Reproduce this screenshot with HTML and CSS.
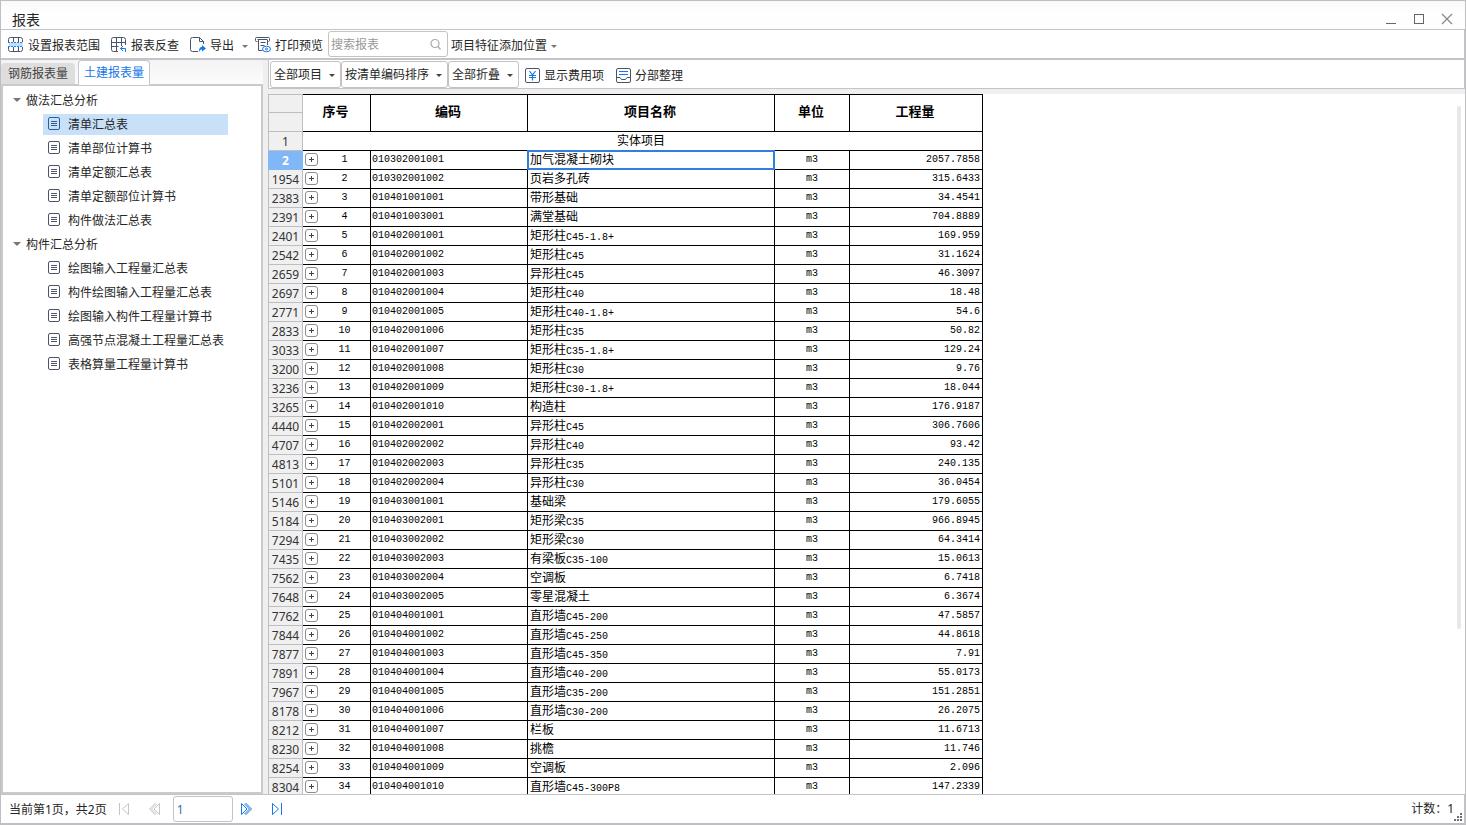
FILE: index.html
```html
<!DOCTYPE html>
<html lang="zh-CN">
<head>
<meta charset="utf-8">
<title>报表</title>
<link rel="stylesheet" href="styles.css">
</head>
<body>
<svg class="defs" aria-hidden="true">
  <symbol id="doc" viewBox="0 0 13 13"><rect x=".5" y=".5" width="11" height="12" rx="1.5" fill="none" stroke="currentColor"/><path d="M3 4.5h6M3 6.5h6M3 8.5h6" stroke="currentColor" fill="none"/></symbol>
</svg>
<header class="titlebar">
  <h1 class="title">报表</h1>
  <div class="window-buttons">
    <button aria-label="最小化"><svg width="12" height="12"><path d="M1 10.5h10" stroke="#666"/></svg></button>
    <button aria-label="最大化"><svg width="12" height="12"><rect x="1.500" y="1.500" width="9" height="9" fill="none" stroke="#666"/></svg></button>
    <button aria-label="关闭"><svg width="12" height="12"><path d="M1 1l10 10M11 1L1 11" stroke="#888" stroke-width="1.200"/></svg></button>
  </div>
</header>

<nav class="toolbar" aria-label="主工具栏">
  <button class="tool"><svg width="16" height="16" fill="none" stroke="#4b5468"><path d="M.5 5V2.500a2 2 0 0 1 2-2h10a2 2 0 0 1 2 2V5M.5 10v2.500a2 2 0 0 0 2 2h10a2 2 0 0 0 2-2V10M5.500 1v4M10.500 1v4M5.500 10v4M10.500 10v4"/><path d="M1 5.500h14v4H1z" fill="#b9e0ff" stroke="none"/><path d="M0 5.500h15M0 9.500h15" stroke="#2680e8" stroke-dasharray="2 1"/></svg>设置报表范围</button>
  <button class="tool"><svg width="16" height="16" fill="none" stroke="#4b5468"><path d="M7 14.500H2.500a2 2 0 0 1-2-2v-10a2 2 0 0 1 2-2h10a2 2 0 0 1 2 2V8M.5 5.500h14M.5 9.500h7M5.500 1v13M10.500 1v8"/><path d="M14.500 15v-3.500H9.500M12 9l-2.500 2.500 2.500 2.500" stroke="#1677e6"/></svg>报表反查</button>
  <button class="tool"><svg width="16" height="16" fill="none" stroke="#4b5468"><path d="M8 14.500H2.500a2 2 0 0 1-2-2v-10a2 2 0 0 1 2-2h7l4 4V7M9.500.5v4h4"/><path d="M9 15c0-4 1-5 3-5V8l4 3.500-4 3V12.500c-2 0-2 1-3 2.500z" fill="#1677e6" stroke="none"/></svg>导出<span class="caret wide"></span></button>
  <button class="tool"><svg width="16" height="16" fill="none" stroke="#4b5468"><path d="M2.500 4.500h-1a1 1 0 0 1-1-1v-2a1 1 0 0 1 1-1h12a1 1 0 0 1 1 1v2a1 1 0 0 1-1 1M2.500 2.500h10M3.500 3v10.500h4M12.500 3v5M5.500 5.500h5M5.500 8.500h4"/><ellipse cx="11.500" cy="12" rx="4" ry="2.800" stroke="#1677e6" fill="#fff"/><circle cx="11.500" cy="12" r="1" stroke="#1677e6"/></svg>打印预览</button>
  <label class="search"><input type="text" placeholder="搜索报表" aria-label="搜索报表"><svg width="11" height="12" fill="none" stroke="#aaa" stroke-width="1.200"><circle cx="5" cy="5.500" r="4"/><path d="M8 8.500l2.500 3"/></svg></label>
  <button class="tool">项目特征添加位置<span class="caret"></span></button>
</nav>

<main class="main">
  <aside class="sidebar">
    <div class="tabs" role="tablist">
      <button class="tab" role="tab">钢筋报表量</button>
      <button class="tab active" role="tab" aria-selected="true">土建报表量</button>
    </div>
    <div class="tree">
      <button class="group"><span class="caret"></span>做法汇总分析</button>
      <ul class="items">
        <li><a class="item selected" href="#"><svg class="doc"><use href="#doc"/></svg>清单汇总表</a></li>
        <li><a class="item" href="#"><svg class="doc"><use href="#doc"/></svg>清单部位计算书</a></li>
        <li><a class="item" href="#"><svg class="doc"><use href="#doc"/></svg>清单定额汇总表</a></li>
        <li><a class="item" href="#"><svg class="doc"><use href="#doc"/></svg>清单定额部位计算书</a></li>
        <li><a class="item" href="#"><svg class="doc"><use href="#doc"/></svg>构件做法汇总表</a></li>
      </ul>
      <button class="group"><span class="caret"></span>构件汇总分析</button>
      <ul class="items">
        <li><a class="item" href="#"><svg class="doc"><use href="#doc"/></svg>绘图输入工程量汇总表</a></li>
        <li><a class="item" href="#"><svg class="doc"><use href="#doc"/></svg>构件绘图输入工程量汇总表</a></li>
        <li><a class="item" href="#"><svg class="doc"><use href="#doc"/></svg>绘图输入构件工程量计算书</a></li>
        <li><a class="item" href="#"><svg class="doc"><use href="#doc"/></svg>高强节点混凝土工程量汇总表</a></li>
        <li><a class="item" href="#"><svg class="doc"><use href="#doc"/></svg>表格算量工程量计算书</a></li>
      </ul>
    </div>
  </aside>

  <section class="report">
    <div class="filters">
      <label class="pick"><select aria-label="项目范围"><option>全部项目</option></select></label>
      <label class="pick"><select aria-label="排序方式"><option>按清单编码排序</option></select></label>
      <label class="pick"><select aria-label="折叠方式"><option>全部折叠</option></select></label>
      <button class="tool"><svg width="15" height="15" fill="none"><rect x=".5" y=".5" width="14" height="14" rx="1.500" stroke="#4b5468"/><path d="M4.500 3l3 4 3-4M4 7.500h7M4 9.500h7M7.500 7v5.500" stroke="#1677e6" stroke-width="1.200"/></svg>显示费用项</button>
      <button class="tool"><svg width="15" height="15" fill="none"><rect x=".5" y=".5" width="14" height="14" rx="1.500" stroke="#4b5468"/><path d="M3 3.500h9M3 6.500h9" stroke="#1677e6"/><path d="M.5 9.500H4l1.500 2h4l1.500-2h3.500" stroke="#4b5468"/></svg>分部整理</button>
    </div>
    <div class="sheet">
      <div class="grid-view">
      <table class="grid">
        <colgroup><col class="c-row"><col class="c-plus"><col class="c-seq"><col class="c-code"><col class="c-name"><col class="c-unit"><col class="c-qty"></colgroup>
        <thead>
          <tr><td class="stub"></td><th rowspan="2" colspan="2">序号</th><th rowspan="2">编码</th><th rowspan="2">项目名称</th><th rowspan="2">单位</th><th rowspan="2">工程量</th></tr>
          <tr><td class="stub"></td></tr>
        </thead>
        <tbody>
          <tr><td class="stub">1</td><td class="section" colspan="6">实体项目</td></tr>
          <tr class="current"><td class="stub">2</td><td><button class="plus" aria-label="展开"></button></td><td>1</td><td>010302001001</td><td class="focus">加气混凝土砌块</td><td>m3</td><td>2057.7858</td></tr>
          <tr><td class="stub">1954</td><td><button class="plus" aria-label="展开"></button></td><td>2</td><td>010302001002</td><td>页岩多孔砖</td><td>m3</td><td>315.6433</td></tr>
          <tr><td class="stub">2383</td><td><button class="plus" aria-label="展开"></button></td><td>3</td><td>010401001001</td><td>带形基础</td><td>m3</td><td>34.4541</td></tr>
          <tr><td class="stub">2391</td><td><button class="plus" aria-label="展开"></button></td><td>4</td><td>010401003001</td><td>满堂基础</td><td>m3</td><td>704.8889</td></tr>
          <tr><td class="stub">2401</td><td><button class="plus" aria-label="展开"></button></td><td>5</td><td>010402001001</td><td>矩形柱<code>C45-1.8+</code></td><td>m3</td><td>169.959</td></tr>
          <tr><td class="stub">2542</td><td><button class="plus" aria-label="展开"></button></td><td>6</td><td>010402001002</td><td>矩形柱<code>C45</code></td><td>m3</td><td>31.1624</td></tr>
          <tr><td class="stub">2659</td><td><button class="plus" aria-label="展开"></button></td><td>7</td><td>010402001003</td><td>异形柱<code>C45</code></td><td>m3</td><td>46.3097</td></tr>
          <tr><td class="stub">2697</td><td><button class="plus" aria-label="展开"></button></td><td>8</td><td>010402001004</td><td>矩形柱<code>C40</code></td><td>m3</td><td>18.48</td></tr>
          <tr><td class="stub">2771</td><td><button class="plus" aria-label="展开"></button></td><td>9</td><td>010402001005</td><td>矩形柱<code>C40-1.8+</code></td><td>m3</td><td>54.6</td></tr>
          <tr><td class="stub">2833</td><td><button class="plus" aria-label="展开"></button></td><td>10</td><td>010402001006</td><td>矩形柱<code>C35</code></td><td>m3</td><td>50.82</td></tr>
          <tr><td class="stub">3033</td><td><button class="plus" aria-label="展开"></button></td><td>11</td><td>010402001007</td><td>矩形柱<code>C35-1.8+</code></td><td>m3</td><td>129.24</td></tr>
          <tr><td class="stub">3200</td><td><button class="plus" aria-label="展开"></button></td><td>12</td><td>010402001008</td><td>矩形柱<code>C30</code></td><td>m3</td><td>9.76</td></tr>
          <tr><td class="stub">3236</td><td><button class="plus" aria-label="展开"></button></td><td>13</td><td>010402001009</td><td>矩形柱<code>C30-1.8+</code></td><td>m3</td><td>18.044</td></tr>
          <tr><td class="stub">3265</td><td><button class="plus" aria-label="展开"></button></td><td>14</td><td>010402001010</td><td>构造柱</td><td>m3</td><td>176.9187</td></tr>
          <tr><td class="stub">4440</td><td><button class="plus" aria-label="展开"></button></td><td>15</td><td>010402002001</td><td>异形柱<code>C45</code></td><td>m3</td><td>306.7606</td></tr>
          <tr><td class="stub">4707</td><td><button class="plus" aria-label="展开"></button></td><td>16</td><td>010402002002</td><td>异形柱<code>C40</code></td><td>m3</td><td>93.42</td></tr>
          <tr><td class="stub">4813</td><td><button class="plus" aria-label="展开"></button></td><td>17</td><td>010402002003</td><td>异形柱<code>C35</code></td><td>m3</td><td>240.135</td></tr>
          <tr><td class="stub">5101</td><td><button class="plus" aria-label="展开"></button></td><td>18</td><td>010402002004</td><td>异形柱<code>C30</code></td><td>m3</td><td>36.0454</td></tr>
          <tr><td class="stub">5146</td><td><button class="plus" aria-label="展开"></button></td><td>19</td><td>010403001001</td><td>基础梁</td><td>m3</td><td>179.6055</td></tr>
          <tr><td class="stub">5184</td><td><button class="plus" aria-label="展开"></button></td><td>20</td><td>010403002001</td><td>矩形梁<code>C35</code></td><td>m3</td><td>966.8945</td></tr>
          <tr><td class="stub">7294</td><td><button class="plus" aria-label="展开"></button></td><td>21</td><td>010403002002</td><td>矩形梁<code>C30</code></td><td>m3</td><td>64.3414</td></tr>
          <tr><td class="stub">7435</td><td><button class="plus" aria-label="展开"></button></td><td>22</td><td>010403002003</td><td>有梁板<code>C35-100</code></td><td>m3</td><td>15.0613</td></tr>
          <tr><td class="stub">7562</td><td><button class="plus" aria-label="展开"></button></td><td>23</td><td>010403002004</td><td>空调板</td><td>m3</td><td>6.7418</td></tr>
          <tr><td class="stub">7648</td><td><button class="plus" aria-label="展开"></button></td><td>24</td><td>010403002005</td><td>零星混凝土</td><td>m3</td><td>6.3674</td></tr>
          <tr><td class="stub">7762</td><td><button class="plus" aria-label="展开"></button></td><td>25</td><td>010404001001</td><td>直形墙<code>C45-200</code></td><td>m3</td><td>47.5857</td></tr>
          <tr><td class="stub">7844</td><td><button class="plus" aria-label="展开"></button></td><td>26</td><td>010404001002</td><td>直形墙<code>C45-250</code></td><td>m3</td><td>44.8618</td></tr>
          <tr><td class="stub">7877</td><td><button class="plus" aria-label="展开"></button></td><td>27</td><td>010404001003</td><td>直形墙<code>C45-350</code></td><td>m3</td><td>7.91</td></tr>
          <tr><td class="stub">7891</td><td><button class="plus" aria-label="展开"></button></td><td>28</td><td>010404001004</td><td>直形墙<code>C40-200</code></td><td>m3</td><td>55.0173</td></tr>
          <tr><td class="stub">7967</td><td><button class="plus" aria-label="展开"></button></td><td>29</td><td>010404001005</td><td>直形墙<code>C35-200</code></td><td>m3</td><td>151.2851</td></tr>
          <tr><td class="stub">8178</td><td><button class="plus" aria-label="展开"></button></td><td>30</td><td>010404001006</td><td>直形墙<code>C30-200</code></td><td>m3</td><td>26.2075</td></tr>
          <tr><td class="stub">8212</td><td><button class="plus" aria-label="展开"></button></td><td>31</td><td>010404001007</td><td>栏板</td><td>m3</td><td>11.6713</td></tr>
          <tr><td class="stub">8230</td><td><button class="plus" aria-label="展开"></button></td><td>32</td><td>010404001008</td><td>挑檐</td><td>m3</td><td>11.746</td></tr>
          <tr><td class="stub">8254</td><td><button class="plus" aria-label="展开"></button></td><td>33</td><td>010404001009</td><td>空调板</td><td>m3</td><td>2.096</td></tr>
          <tr><td class="stub">8304</td><td><button class="plus" aria-label="展开"></button></td><td>34</td><td>010404001010</td><td>直形墙<code>C45-300P8</code></td><td>m3</td><td>147.2339</td></tr>
        </tbody>
      </table>
      </div>
      <div class="scrollbar"><div class="thumb"></div></div>
    </div>
  </section>
</main>

<footer class="status">
  <span class="pages">当前第1页，共2页</span>
  <button class="nav-button" aria-label="第一页" disabled><svg width="12" height="14" fill="none" stroke="#c4c4c4"><path d="M1.500 1v12M10.500 1.500L4.500 7l6 5.500z"/></svg></button>
  <button class="nav-button" aria-label="上一页" disabled><svg width="12" height="14" fill="none" stroke="#c4c4c4"><path d="M6.500 1L.5 7l6 6M10.500 1.500v11L5 7zM7.500 2l-5 5 5 5"/></svg></button>
  <input class="page-input" type="text" value="1" aria-label="页码">
  <button class="nav-button" aria-label="下一页"><svg width="12" height="14" fill="none" stroke="#1677e6"><path d="M5.500 1l6 6-6 6M1.500 1.500v11L7 7zM4.500 2l5 5-5 5"/></svg></button>
  <button class="nav-button" aria-label="最后一页"><svg width="12" height="14" fill="none" stroke="#1677e6"><path d="M10.500 1v12M1.500 1.500L7.500 7l-6 5.500z"/></svg></button>
  <span class="count">计数：1</span>
  <svg class="grip" width="8" height="8" fill="#6a6f7c"><path d="M6 0h2v2H6zM3 3h2v2H3zM6 3h2v2H6zM0 6h2v2H0zM3 6h2v2H3zM6 6h2v2H6z"/></svg>
</footer>
</body>
</html>
```
FILE: styles.css
```css
* { box-sizing: border-box; }

body {
  margin: 0;
  height: 100vh;
  display: flex;
  flex-direction: column;
  overflow: hidden;
  border: 1px solid #bfbfc2;
  border-bottom-width: 2px;
  background: #fff;
  color: #262626;
  font: 12px/18px "Noto Sans", "Noto Sans CJK SC", sans-serif;
}

.defs { position: absolute; width: 0; height: 0; }

button, input, select {
  margin: 0;
  padding: 0;
  border: 0;
  background: none;
  color: inherit;
  font: inherit;
}

svg { flex: none; display: block; }

/* Title bar */
.titlebar {
  flex: none;
  display: flex;
  justify-content: space-between;
  align-items: center;
  height: 28px;
  padding: 8px 12px 0 11px;
  background: linear-gradient(#f9f9f9, #fefefe 40%);
}
.title { margin: 0; padding-top: 2px; font-size: 14px; line-height: 18px; font-weight: 400; }
.window-buttons { display: flex; gap: 16px; }

/* Toolbars */
.toolbar {
  flex: none;
  display: flex;
  align-items: center;
  height: 31px;
  padding-left: 7px;
  border: 1px solid #c3c3c9;
  border-left: 0;
  border-bottom-width: 2px;
}
.tool { display: flex; align-items: center; gap: 4px; margin-right: 11px; padding-top: 4px; white-space: nowrap; }
.tool svg { margin-bottom: 2px; }
.caret {
  width: 0;
  border: 3px solid transparent;
  border-top-color: #777;
  border-bottom: 0;
}
.caret.wide { margin-left: 4px; margin-right: -4px; }
.search {
  display: flex;
  align-items: center;
  width: 120px;
  height: 26px;
  margin: 0 3px 0 -6px;
  padding: 0 6px 0 2px;
  border: 1px solid #c3c3c3;
  border-radius: 3px;
}
.search input { flex: 1; min-width: 0; padding-top: 2px; outline: 0; }
.search input::placeholder { color: #999; opacity: 1; }

/* Main area */
.main { flex: 1; min-height: 0; display: flex; background: #efefef; }

.sidebar { flex: none; width: 262px; display: flex; flex-direction: column; }
.tabs {
  display: flex;
  align-items: flex-end;
  gap: 3px;
  height: 24px;
  background: linear-gradient(#f3f3f3, #fcfcfc);
}
.tab {
  height: 21px;
  width: 74px;
  border-radius: 4px 4px 0 0;
  background: #dedede;
  color: #444;
}
.tab.active {
  position: relative;
  width: 72px;
  height: 25px;
  margin-bottom: -1px;
  border: 1px solid #c6c6cc;
  border-bottom: 0;
  background: #fff;
  color: #1677e6;
}
.tree {
  flex: 1;
  padding: 2px 0 0 9px;
  border: 2px solid #c9c9ce;
  background: #fff;
}
.group { display: flex; align-items: center; gap: 5px; height: 24px; padding: 2px 0 0 1px; }
.group .caret { margin-bottom: 2px; border-width: 4px; border-bottom: 0; border-top-color: #777; }
.items { list-style: none; margin: 0; padding: 0 33px 0 31px; }
.items li { display: flex; align-items: center; height: 24px; }
.item {
  flex: 1;
  display: flex;
  align-items: center;
  gap: 7px;
  height: 21px;
  padding: 2px 0 0 5px;
  color: inherit;
  text-decoration: none;
  white-space: nowrap;
}
.item.selected { background: #c9e0f9; }
.doc { width: 13px; height: 13px; margin-bottom: 4px; color: #4b5468; }
.selected .doc { color: #2b5f96; }

.report {
  flex: 1;
  min-width: 0;
  display: flex;
  flex-direction: column;
  margin-left: 5px;
}
.filters {
  flex: none;
  display: flex;
  align-items: center;
  height: 29px;
  padding-left: 1px;
  border: 1px solid #c3c3c9;
  border-top: 0;
  background: #fff;
}
.filters .tool { margin: 0 0 0 6px; }
.filters .tool + .tool { margin-left: 12px; }
.pick {
  position: relative;
  display: flex;
  height: 27px;
  border: 1px solid #c3c3c3;
  border-radius: 3px;
}
.pick select { appearance: none; padding: 2px 17px 0 3px; outline: 0; }
.pick::after {
  content: "";
  position: absolute;
  right: 5px;
  top: 12px;
  border: 3px solid transparent;
  border-top-color: #444;
  border-bottom: 0;
  pointer-events: none;
}

/* Sheet */
.sheet { flex: 1; min-height: 0; display: flex; margin-top: 5px; background: #fff; }
.grid-view { flex: 1; min-width: 0; overflow: hidden; }
.grid {
  width: 715px;
  table-layout: fixed;
  border-collapse: separate;
  border-spacing: 0;
  color: #000;
  font: 10px/12px "Liberation Mono", "Noto Sans CJK SC", monospace;
}
.c-row { width: 35px; }
.c-plus { width: 16px; }
.c-seq { width: 52px; }
.c-code { width: 157px; }
.c-name { width: 247px; }
.c-unit { width: 75px; }
.c-qty { width: 133px; }
.grid tr { height: 19px; }
.grid th, .grid td {
  height: 19px;
  padding: 0 2px;
  border: solid #000;
  border-width: 0 1px 1px 0;
  text-align: center;
  white-space: nowrap;
}
.grid th { border-top-width: 1px; padding: 0 3px 1px 1px; font-size: 13px; font-weight: 700; }
.grid td:nth-child(2):not(.section) { border-right: 0; }
.grid td:nth-child(4) { padding-left: 1px; text-align: left; }
.grid td:nth-child(5) { padding-top: 2px; text-align: left; font-size: 12px; }
.grid td:nth-child(7) { text-align: right; }
.grid .section { padding: 2px 4px 0 1px; font-size: 12px; }
.grid code { font: 10px/12px "Liberation Mono", monospace; }
.grid .stub {
  padding: 2px 0 0;
  border-color: #bdbdc2;
  border-left-width: 1px;
  background: #f0f0f0;
  color: #333;
  font: 12px/16px "Noto Sans", sans-serif;
}
.grid thead tr:first-child .stub { border-top-width: 1px; }
.grid .current .stub { background: #7fb7f7; border-color: #7fb7f7; color: #fff; font-weight: 700; }
.focus { position: relative; }
.focus::after {
  content: "";
  position: absolute;
  inset: -1px;
  border: 2px solid #2f7fdc;
  pointer-events: none;
}
.plus {
  display: block;
  width: 13px;
  height: 13px;
  margin-bottom: 2px;
  border: 1px solid #8c8c8c;
  border-radius: 3px;
  background:
    linear-gradient(#444, #444) center / 5px 1px no-repeat,
    linear-gradient(#444, #444) center / 1px 5px no-repeat,
    #fff;
}
.scrollbar { flex: none; width: 8px; padding-top: 12px; }
.thumb { width: 4px; height: 76%; border-radius: 2px; background: #e8e8e8; }

/* Status bar */
.status {
  flex: none;
  display: flex;
  align-items: center;
  height: 29px;
  padding: 0 2px 0 8px;
  border: 1px solid #c3c3c9;
  border-width: 1px 1px 0 0;
}
.pages { margin-right: 11px; padding-top: 2px; }
.nav-button { margin-right: 19px; }
.nav-button:disabled + .page-input { margin-left: -7px; }
.page-input {
  width: 60px;
  height: 26px;
  margin-right: 7px;
  padding-left: 3px;
  border: 1px solid #c3c3c3;
  border-radius: 3px;
  color: #2f6fae;
}
.count { margin-left: auto; }
.grip { align-self: flex-end; margin-bottom: 2px; }
```
